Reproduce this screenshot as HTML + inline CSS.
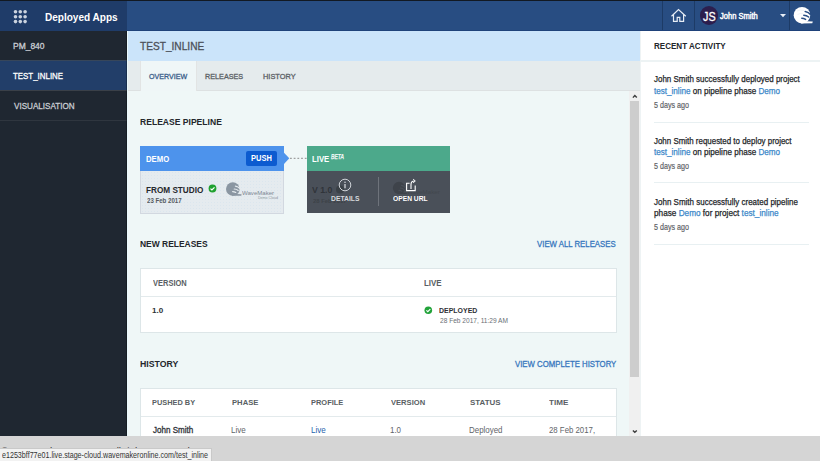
<!DOCTYPE html>
<html><head><meta charset="utf-8">
<style>
*{margin:0;padding:0;box-sizing:border-box}
html,body{width:820px;height:461px;overflow:hidden;background:#eff7f7;font-family:"Liberation Sans",sans-serif}
.a{position:absolute;white-space:nowrap}
.t{position:absolute;white-space:nowrap;transform-origin:0 0}
.r{position:absolute}
</style></head><body>
<!-- header -->
<div class="r" style="left:0;top:0;width:820px;height:31px;background:#284d82"></div>
<div class="r" style="left:127px;top:30px;width:693px;height:1px;background:#1f427a"></div>
<div class="r" style="left:0;top:0;width:820px;height:1px;background:#121922"></div>
<div class="r" style="left:0;top:1px;width:127px;height:30px;background:#1f3c69"></div>
<svg class="a" style="left:0;top:0" width="40" height="30" viewBox="0 0 40 30"><g fill="#cbd3df"><circle cx="15.5" cy="11.8" r="1.8"/><circle cx="20.3" cy="11.8" r="1.8"/><circle cx="25.1" cy="11.8" r="1.8"/><circle cx="15.5" cy="16.7" r="1.8"/><circle cx="20.3" cy="16.7" r="1.8"/><circle cx="25.1" cy="16.7" r="1.8"/><circle cx="15.5" cy="21.6" r="1.8"/><circle cx="20.3" cy="21.6" r="1.8"/><circle cx="25.1" cy="21.6" r="1.8"/></g></svg>
<div class="r" style="left:662px;top:1px;width:1px;height:29px;background:#1d3b66"></div>
<div class="r" style="left:694px;top:1px;width:1px;height:29px;background:#1d3b66"></div>
<div class="r" style="left:789px;top:1px;width:1px;height:29px;background:#1d3b66"></div>
<svg class="a" style="left:668px;top:6px" width="22" height="20" viewBox="668 6 22 20"><path d="M671.5 16.3 L678.5 9.6 L685.8 16.3 M673.5 14.6 V21.3 H677.2 V17.3 H679.8 V21.3 H683.6 V14.6" stroke="#e8eef6" stroke-width="1.2" fill="none"/></svg>
<div class="r" style="left:699.6px;top:6px;width:18.6px;height:18.8px;border-radius:50%;background:#2c1e4e"></div>
<svg class="a" style="left:780px;top:14px" width="6" height="4"><path d="M0 0 H6 L3 3.2Z" fill="#e8eef6"/></svg>
<svg class="a" style="left:790px;top:3px" width="26" height="24" viewBox="790 3 26 24">
<circle cx="802" cy="15.2" r="8.3" fill="#fff"/>
<path d="M800 21 L812.8 21.6 L812.3 23.3 L801 23.4Z" fill="#fff"/>
<g stroke="#294f85" stroke-width="1.5" fill="none" stroke-linecap="round">
<path d="M805.2 11.6 Q808.5 12 811 15"/>
<path d="M803.8 15.2 Q806.5 15.3 808.6 17"/>
<path d="M801.8 18.3 Q803.8 18.3 805.6 19.4"/>
</g>
<g stroke="#dfe6ee" stroke-width="0.5" fill="none"><path d="M797 11 A9 9 0 0 1 804 10.5"/><path d="M797.5 14.5 A7 7 0 0 1 803 13.8"/></g>
</svg>

<!-- sidebar -->
<div class="r" style="left:0;top:31px;width:127px;height:405px;background:#1f2731"></div>
<div class="r" style="left:0;top:60px;width:127px;height:1px;background:#37465a"></div>
<div class="r" style="left:0;top:61px;width:127px;height:29px;background:#223e69"></div>
<div class="r" style="left:0;top:90px;width:127px;height:1px;background:#3a4048"></div>
<div class="r" style="left:0;top:120px;width:127px;height:1px;background:#2f363f"></div>
<div class="r" style="left:126px;top:31px;width:1px;height:405px;background:rgba(0,0,0,0.25)"></div>

<!-- title + tabs -->
<div class="r" style="left:127px;top:31px;width:513px;height:30px;background:#cbe4fa"></div>
<div class="r" style="left:127px;top:61px;width:513px;height:30px;background:#e5ebed;border-bottom:1px solid #dde1e2"></div>
<div class="r" style="left:140px;top:61px;width:57px;height:30px;background:#eff6f7;border-left:1px solid #e2e4e4;border-right:1px solid #e2e4e4"></div>
<div class="r" style="left:127px;top:31px;width:1px;height:405px;background:#e9f8fc"></div>

<!-- demo card -->
<div class="r" style="left:140px;top:146px;width:144px;height:68px;background-color:#e5ebef;background-image:radial-gradient(circle,#dbe6ee 0.6px,transparent 0.9px);background-size:3px 3px;border:1px solid #d2d8e0"></div>
<div class="r" style="left:140px;top:146px;width:144px;height:25px;background:#4d93ec"></div>
<div class="r" style="left:246px;top:151px;width:31px;height:15px;background:#0c5bd0;border-radius:2px"></div>
<svg class="a" style="left:284px;top:152px" width="6" height="12"><path d="M0 0.7 L5.3 6.2 L0 12Z" fill="#4d93ec"/></svg>
<svg class="a" style="left:289px;top:156px" width="18" height="4" viewBox="289 156 18 4"><line x1="290" y1="158.3" x2="307" y2="158.3" stroke="#8a8a8a" stroke-width="1" stroke-dasharray="1.8 1.9"/></svg>
<svg class="a" style="left:207.7px;top:184.2px" width="9" height="9" viewBox="0 0 9 9"><circle cx="4.5" cy="4.5" r="3.9" fill="#1fa12f"/><path d="M2.5 4.6 L3.9 5.9 L6.5 3.3" stroke="#fff" stroke-width="1.2" fill="none"/></svg>
<svg class="a" style="left:220px;top:178px" width="25" height="22" viewBox="220 178 25 22"><g transform="translate(232.8 189.0) scale(0.82)"><circle cx="0" cy="0" r="8.3" fill="#8a96a2"/><path d="M-2 5.8 L10.8 6.4 L10.3 8.1 L-1 8.2Z" fill="#8a96a2"/><g stroke="#e5ebef" stroke-width="1.5" fill="none" stroke-linecap="round"><path d="M3.2 -3.6 Q6.5 -3.2 9 -0.2"/><path d="M1.8 0 Q4.5 0.1 6.6 1.8"/><path d="M-0.2 3.1 Q1.8 3.1 3.6 4.2"/></g></g></svg>
<div class="t" style="left:242px;top:189px;font-size:6.2px;line-height:8px;color:#7d8894;transform:scaleX(0.98)">WaveMaker</div>
<div class="t" style="left:258px;top:196px;font-size:3.6px;line-height:4px;color:#8b96a0">Demo Cloud</div>

<!-- live card -->
<div class="r" style="left:307px;top:171px;width:143px;height:42px;background:#4a5059"></div>
<div class="t" style="left:312.30px;top:186.00px;font-size:8.87px;line-height:8.87px;font-weight:bold;color:#30343a;transform:scaleX(0.986);">V 1.0</div>
<div class="t" style="left:312.82px;top:198.00px;font-size:6.10px;line-height:6.10px;font-weight:bold;color:#3d4248;transform:scaleX(0.970);">28 Feb 2017</div>
<svg class="a" style="left:335px;top:185px" width="10" height="10"><circle cx="5" cy="4.5" r="4" fill="#3a4046"/></svg>
<svg class="a" style="left:388px;top:178px" width="22" height="20" viewBox="388 178 22 20"><g transform="translate(399 188) scale(0.74)"><circle cx="0" cy="0" r="8.3" fill="#3e434a"/><path d="M-2 5.8 L10.8 6.4 L10.3 8.1 L-1 8.2Z" fill="#3e434a"/><g stroke="#4a5059" stroke-width="1.5" fill="none" stroke-linecap="round"><path d="M3.2 -3.6 Q6.5 -3.2 9 -0.2"/><path d="M1.8 0 Q4.5 0.1 6.6 1.8"/><path d="M-0.2 3.1 Q1.8 3.1 3.6 4.2"/></g></g></svg>
<div class="t" style="left:407px;top:188px;font-size:6.2px;line-height:8px;color:#42474e">WaveMaker</div>
<div class="r" style="left:307px;top:146px;width:143px;height:25px;background:#4ca98b"></div>
<div class="r" style="left:378px;top:177px;width:1px;height:29px;background:#6e737b"></div>
<svg class="a" style="left:338px;top:178px" width="14" height="14" viewBox="0 0 14 14"><circle cx="7" cy="7" r="5.8" stroke="#cfd3d8" stroke-width="1" fill="none"/><rect x="6.35" y="6" width="1.3" height="4.3" fill="#cfd3d8"/><circle cx="7" cy="4.2" r="0.8" fill="#cfd3d8"/></svg>
<svg class="a" style="left:400px;top:175px" width="20" height="20" viewBox="400 175 20 20"><path d="M409.6 183.3 H406.6 V190.6 H415.2 V185.5" stroke="#fff" stroke-width="1.1" fill="none"/><path d="M411 189 V184.5 Q411 181 414.3 181" stroke="#fff" stroke-width="1.1" fill="none"/><path d="M413.2 179.2 L415.3 181 L413.2 182.8" stroke="#fff" stroke-width="1" fill="none"/></svg>

<!-- new releases table -->
<div class="r" style="left:140px;top:268px;width:477px;height:65px;background:#fff;border:1px solid #dde6e8"></div>
<div class="r" style="left:141px;top:296px;width:475px;height:1px;background:#e3eaec"></div>
<svg class="a" style="left:424px;top:305.5px" width="9" height="9" viewBox="0 0 9 9"><circle cx="4.3" cy="4.3" r="3.8" fill="#22a33a"/><path d="M2.4 4.4 L3.8 5.7 L6.3 3.1" stroke="#fff" stroke-width="1.2" fill="none"/></svg>

<!-- history table -->
<div class="r" style="left:140px;top:388px;width:477px;height:60px;background:#fff;border:1px solid #dde6e8"></div>
<div class="r" style="left:141px;top:416px;width:475px;height:1px;background:#e3eaec"></div>

<!-- scrollbar -->
<div class="r" style="left:629px;top:91px;width:11px;height:345px;background:#f0f0f0"></div>
<div class="r" style="left:630px;top:101px;width:9px;height:276px;background:#cdcdcd"></div>
<svg class="a" style="left:630px;top:92px" width="10" height="8" viewBox="630 92 10 8"><path d="M632.9 97.6 L634.8 95.5 L636.8 97.6" stroke="#3c3c3c" stroke-width="1.4" fill="none"/></svg>
<svg class="a" style="left:630px;top:426px" width="10" height="8" viewBox="630 426 10 8"><path d="M632.9 430.4 L634.8 432.3 L636.8 430.4" stroke="#3c3c3c" stroke-width="1.4" fill="none"/></svg>

<!-- right panel -->
<div class="r" style="left:640px;top:31px;width:180px;height:405px;background:#fff"></div>
<div class="r" style="left:640px;top:31px;width:1px;height:405px;background:#eef3f4"></div>
<div class="r" style="left:640px;top:60px;width:180px;height:2px;background:#edf3f4"></div>
<div class="r" style="left:654px;top:122px;width:155px;height:1px;background:#e8f0f2"></div>
<div class="r" style="left:654px;top:182px;width:155px;height:1px;background:#e8f0f2"></div>
<div class="r" style="left:654px;top:244px;width:155px;height:1px;background:#e8f0f2"></div>

<!-- footer -->
<div class="r" style="left:0;top:436px;width:820px;height:25px;background:#d5d5d5"></div>
<div class="t" style="left:1px;top:444.5px;font-size:9.5px;line-height:12px;color:#333;transform:scaleX(1.05)">© WaveMaker Inc 2016. All rights reserved</div>
<div class="r" style="left:0;top:448px;width:212px;height:13px;background:#f2f2f2;border-top:1px solid #c9c9c9;border-right:1px solid #c9c9c9"></div>
<div class="t" style="left:2.2px;top:449.5px;font-size:8.6px;line-height:10px;color:#333;transform:scaleX(0.83)">e1253bff77e01.live.stage-cloud.wavemakeronline.com/test_inline</div>

<div class="t" style="left:44.60px;top:12.00px;font-size:11.19px;line-height:11.19px;font-weight:bold;color:#fff;transform:scaleX(0.896);">Deployed Apps</div>
<div class="t" style="left:702.99px;top:11.00px;font-size:12.79px;line-height:12.79px;font-weight:normal;color:#fff;transform:scaleX(0.845);-webkit-text-stroke:0.3px currentColor;">JS</div>
<div class="t" style="left:720.42px;top:12.00px;font-size:8.87px;line-height:8.87px;font-weight:normal;color:#fff;transform:scaleX(0.850);-webkit-text-stroke:0.45px #fff;">John Smith</div>
<div class="t" style="left:12.87px;top:42.00px;font-size:8.72px;line-height:8.72px;font-weight:normal;color:#c9cdd3;transform:scaleX(0.971);-webkit-text-stroke:0.3px currentColor;">PM_840</div>
<div class="t" style="left:13.39px;top:72.00px;font-size:9.30px;line-height:9.30px;font-weight:normal;color:#fff;transform:scaleX(0.850);-webkit-text-stroke:0.3px currentColor;">TEST_INLINE</div>
<div class="t" style="left:13.55px;top:102.00px;font-size:9.30px;line-height:9.30px;font-weight:normal;color:#c9cdd3;transform:scaleX(0.871);-webkit-text-stroke:0.3px currentColor;">VISUALISATION</div>
<div class="t" style="left:139.90px;top:41.00px;font-size:11.34px;line-height:11.34px;font-weight:normal;color:#4b5058;transform:scaleX(0.895);-webkit-text-stroke:0.3px currentColor;">TEST_INLINE</div>
<div class="t" style="left:148.62px;top:73.00px;font-size:7.56px;line-height:7.56px;font-weight:normal;color:#3b5e8a;transform:scaleX(0.942);-webkit-text-stroke:0.3px currentColor;">OVERVIEW</div>
<div class="t" style="left:204.92px;top:73.00px;font-size:7.56px;line-height:7.56px;font-weight:normal;color:#5c6166;transform:scaleX(0.958);-webkit-text-stroke:0.3px currentColor;">RELEASES</div>
<div class="t" style="left:263.01px;top:73.00px;font-size:7.56px;line-height:7.56px;font-weight:normal;color:#5c6166;transform:scaleX(0.982);-webkit-text-stroke:0.3px currentColor;">HISTORY</div>
<div class="t" style="left:139.79px;top:117.00px;font-size:9.59px;line-height:9.59px;font-weight:bold;color:#23262b;transform:scaleX(0.894);">RELEASE PIPELINE</div>
<div class="t" style="left:146.24px;top:155.00px;font-size:8.87px;line-height:8.87px;font-weight:bold;color:#fff;transform:scaleX(0.871);">DEMO</div>
<div class="t" style="left:251.25px;top:154.00px;font-size:8.58px;line-height:8.58px;font-weight:bold;color:#fff;transform:scaleX(0.874);">PUSH</div>
<div class="t" style="left:146.21px;top:185.00px;font-size:9.59px;line-height:9.59px;font-weight:bold;color:#25282c;transform:scaleX(0.855);">FROM STUDIO</div>
<div class="t" style="left:146.52px;top:198.00px;font-size:6.40px;line-height:6.40px;font-weight:bold;color:#555a60;transform:scaleX(0.954);">23 Feb 2017</div>
<div class="t" style="left:312.13px;top:155.00px;font-size:8.87px;line-height:8.87px;font-weight:bold;color:#fff;transform:scaleX(0.875);">LIVE</div>
<div class="t" style="left:331.25px;top:153.00px;font-size:6.98px;line-height:6.98px;font-weight:normal;color:#fff;transform:scaleX(0.734);font-style:italic;-webkit-text-stroke:0.25px #fff;">BETA</div>
<div class="t" style="left:330.59px;top:195.00px;font-size:7.99px;line-height:7.99px;font-weight:bold;color:#d5d8dc;transform:scaleX(0.847);">DETAILS</div>
<div class="t" style="left:393.23px;top:195.00px;font-size:7.99px;line-height:7.99px;font-weight:bold;color:#fff;transform:scaleX(0.838);">OPEN URL</div>
<div class="t" style="left:139.89px;top:240.00px;font-size:9.30px;line-height:9.30px;font-weight:bold;color:#23262b;transform:scaleX(0.909);">NEW RELEASES</div>
<div class="t" style="left:537.10px;top:240.00px;font-size:8.58px;line-height:8.58px;font-weight:normal;color:#3877be;transform:scaleX(0.910);-webkit-text-stroke:0.3px currentColor;">VIEW ALL RELEASES</div>
<div class="t" style="left:152.80px;top:280.00px;font-size:8.14px;line-height:8.14px;font-weight:bold;color:#5a5f64;transform:scaleX(0.922);">VERSION</div>
<div class="t" style="left:424.22px;top:280.00px;font-size:8.14px;line-height:8.14px;font-weight:bold;color:#5a5f64;transform:scaleX(0.977);">LIVE</div>
<div class="t" style="left:152.32px;top:307.00px;font-size:7.27px;line-height:7.27px;font-weight:bold;color:#2e3136;transform:scaleX(1.106);">1.0</div>
<div class="t" style="left:439.48px;top:307.00px;font-size:7.56px;line-height:7.56px;font-weight:bold;color:#2e3136;transform:scaleX(0.925);">DEPLOYED</div>
<div class="t" style="left:439.57px;top:318.00px;font-size:6.54px;line-height:6.54px;font-weight:normal;color:#6a6f74;transform:scaleX(1.008);">28 Feb 2017, 11:29 AM</div>
<div class="t" style="left:139.88px;top:360.00px;font-size:9.30px;line-height:9.30px;font-weight:bold;color:#23262b;transform:scaleX(0.938);">HISTORY</div>
<div class="t" style="left:514.80px;top:360.00px;font-size:8.58px;line-height:8.58px;font-weight:normal;color:#3877be;transform:scaleX(0.907);-webkit-text-stroke:0.3px currentColor;">VIEW COMPLETE HISTORY</div>
<div class="t" style="left:152.46px;top:399.00px;font-size:7.70px;line-height:7.70px;font-weight:bold;color:#5a5f64;transform:scaleX(0.961);">PUSHED BY</div>
<div class="t" style="left:231.64px;top:399.00px;font-size:7.70px;line-height:7.70px;font-weight:bold;color:#5a5f64;transform:scaleX(0.996);">PHASE</div>
<div class="t" style="left:310.95px;top:399.00px;font-size:7.70px;line-height:7.70px;font-weight:bold;color:#5a5f64;transform:scaleX(0.971);">PROFILE</div>
<div class="t" style="left:390.80px;top:399.00px;font-size:7.70px;line-height:7.70px;font-weight:bold;color:#5a5f64;transform:scaleX(0.986);">VERSION</div>
<div class="t" style="left:469.64px;top:399.00px;font-size:7.70px;line-height:7.70px;font-weight:bold;color:#5a5f64;transform:scaleX(1.033);">STATUS</div>
<div class="t" style="left:549.12px;top:399.00px;font-size:7.70px;line-height:7.70px;font-weight:bold;color:#5a5f64;transform:scaleX(1.053);">TIME</div>
<div class="t" style="left:152.82px;top:426.00px;font-size:8.87px;line-height:8.87px;font-weight:normal;color:#2e3136;transform:scaleX(0.907);-webkit-text-stroke:0.3px currentColor;">John Smith</div>
<div class="t" style="left:231.45px;top:426.00px;font-size:8.87px;line-height:8.87px;font-weight:normal;color:#5f6469;transform:scaleX(0.912);">Live</div>
<div class="t" style="left:310.75px;top:426.00px;font-size:8.87px;line-height:8.87px;font-weight:normal;color:#1f62ad;transform:scaleX(0.912);">Live</div>
<div class="t" style="left:390.24px;top:426.00px;font-size:8.87px;line-height:8.87px;font-weight:normal;color:#5f6469;transform:scaleX(0.896);">1.0</div>
<div class="t" style="left:469.16px;top:426.00px;font-size:8.87px;line-height:8.87px;font-weight:normal;color:#5f6469;transform:scaleX(0.896);">Deployed</div>
<div class="t" style="left:548.81px;top:426.00px;font-size:8.87px;line-height:8.87px;font-weight:normal;color:#5f6469;transform:scaleX(0.882);">28 Feb 2017,</div>
<div class="t" style="left:653.72px;top:42.00px;font-size:8.87px;line-height:8.87px;font-weight:bold;color:#23262b;transform:scaleX(0.908);">RECENT ACTIVITY</div>
<div class="t" style="left:654.12px;top:75.00px;font-size:9.01px;line-height:9.01px;font-weight:normal;color:#222528;transform:scaleX(0.886);-webkit-text-stroke:0.25px #222528;">John Smith successfully deployed project</div>
<div class="t" style="left:654.12px;top:87.00px;font-size:9.01px;line-height:9.01px;font-weight:normal;color:#222528;transform:scaleX(0.900);-webkit-text-stroke:0.25px currentColor;"><span style="color:#3a87c9">test_inline</span> on pipeline phase <span style="color:#3a87c9">Demo</span></div>
<div class="t" style="left:653.91px;top:101.00px;font-size:8.43px;line-height:8.43px;font-weight:normal;color:#5f6368;transform:scaleX(0.847);-webkit-text-stroke:0.2px currentColor;">5 days ago</div>
<div class="t" style="left:654.12px;top:137.00px;font-size:9.01px;line-height:9.01px;font-weight:normal;color:#222528;transform:scaleX(0.881);-webkit-text-stroke:0.25px #222528;">John Smith requested to deploy project</div>
<div class="t" style="left:654.12px;top:148.00px;font-size:9.01px;line-height:9.01px;font-weight:normal;color:#222528;transform:scaleX(0.900);-webkit-text-stroke:0.25px currentColor;"><span style="color:#3a87c9">test_inline</span> on pipeline phase <span style="color:#3a87c9">Demo</span></div>
<div class="t" style="left:653.91px;top:162.00px;font-size:8.43px;line-height:8.43px;font-weight:normal;color:#5f6368;transform:scaleX(0.847);-webkit-text-stroke:0.2px currentColor;">5 days ago</div>
<div class="t" style="left:654.12px;top:198.00px;font-size:9.01px;line-height:9.01px;font-weight:normal;color:#222528;transform:scaleX(0.888);-webkit-text-stroke:0.25px #222528;">John Smith successfully created pipeline</div>
<div class="t" style="left:653.71px;top:209.00px;font-size:9.01px;line-height:9.01px;font-weight:normal;color:#222528;transform:scaleX(0.912);-webkit-text-stroke:0.25px currentColor;">phase <span style="color:#3a87c9">Demo</span> for project <span style="color:#3a87c9">test_inline</span></div>
<div class="t" style="left:653.91px;top:223.00px;font-size:8.43px;line-height:8.43px;font-weight:normal;color:#5f6368;transform:scaleX(0.847);-webkit-text-stroke:0.2px currentColor;">5 days ago</div>
</body></html>
